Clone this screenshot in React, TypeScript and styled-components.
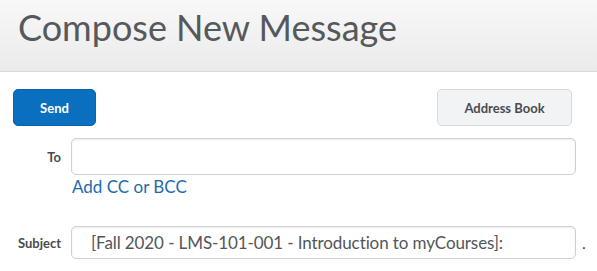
import React from 'react';
import styled, { createGlobalStyle } from 'styled-components';

const GlobalStyle = createGlobalStyle`
  body {
    margin: 0;
    background: #ffffff;
    font-family: Lato, "Open Sans", sans-serif;
  }
`;

const App: React.FC = () => {
  return (
    <>
      <GlobalStyle />
      <Page>
        <Header>
          <Title>Compose New Message</Title>
        </Header>
        <Toolbar>
          <Button $primary>Send</Button>
          <Button>Address Book</Button>
        </Toolbar>
        <Form>
          <Label>To</Label>
          <Field $height={37} />
          <span />
          <AddLink href="#">Add CC or BCC</AddLink>
          <Spacer />
          <Spacer />
          <Label>Subject</Label>
          <FieldRow>
            <Field $height={33}>[Fall 2020 - LMS-101-001 - Introduction to myCourses]:</Field>
            <Trailing>.</Trailing>
          </FieldRow>
        </Form>
      </Page>
    </>
  );
};

export default App;

const Page = styled.div`
  width: 597px;
  height: 271px;
  overflow: hidden;
`;

const Header = styled.div`
  box-sizing: border-box;
  height: 72px;
  padding: 6px 0 0 18px;
  background: linear-gradient(to bottom, #f8f8f8, #ebebeb);
  border-bottom: 1px solid #d9d9d9;
`;

const Title = styled.h1`
  margin: 0;
  font-size: 36px;
  line-height: 42px;
  font-weight: 400;
  color: #55595c;
`;

const Toolbar = styled.div`
  display: flex;
  justify-content: space-between;
  padding: 17px 25px 0 13px;
`;

const Button = styled.button<{ $primary?: boolean }>`
  height: 37px;
  width: ${(p) => (p.$primary ? '83px' : '135px')};
  border-radius: 5px;
  font-family: Lato, sans-serif;
  font-size: 13px;
  font-weight: 700;
  cursor: pointer;
  border: 1px solid ${(p) => (p.$primary ? '#0a64ad' : '#d3d9e3')};
  background: ${(p) => (p.$primary ? '#0b6fc0' : '#f1f3f5')};
  color: ${(p) => (p.$primary ? '#ffffff' : '#494c4e')};
`;

const Form = styled.div`
  display: grid;
  grid-template-columns: 71px 526px;
  align-items: center;
  padding-top: 12px;
`;

const Label = styled.div`
  text-align: right;
  padding-right: 10px;
  font-size: 13px;
  font-weight: 700;
  color: #494c4e;
`;

const FieldRow = styled.div`
  display: flex;
  align-items: center;
`;

const Field = styled.div<{ $height: number }>`
  box-sizing: border-box;
  width: 505px;
  height: ${(p) => p.$height}px;
  border: 1px solid #cdd1d5;
  border-radius: 5px;
  box-shadow: inset 0 1px 2px rgba(0, 0, 0, 0.08);
  padding: 0 19px;
  display: flex;
  align-items: center;
  font-size: 17px;
  letter-spacing: -0.1px;
  color: #525659;
  white-space: nowrap;
`;

const Trailing = styled.span`
  margin-left: 6px;
  font-size: 16px;
  color: #494c4e;
`;

const AddLink = styled.a`
  justify-self: start;
  margin-top: 2px;
  margin-left: 1px;
  font-size: 17px;
  line-height: 20px;
  color: #1d6bb0;
  text-decoration: none;
`;

const Spacer = styled.div`
  height: 29px;
`;
